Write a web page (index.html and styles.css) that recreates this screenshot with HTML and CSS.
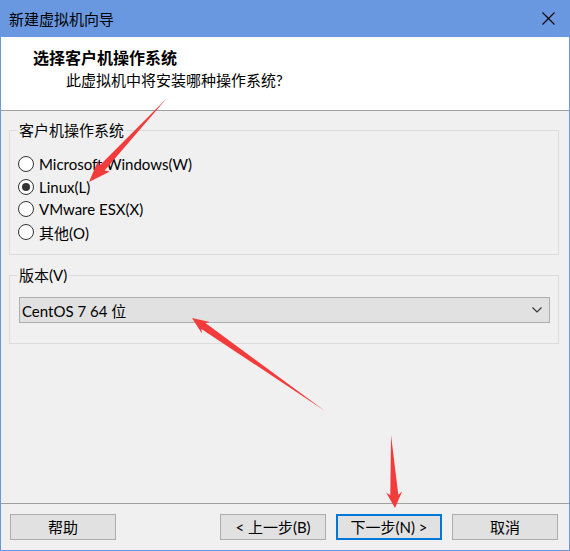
FILE: index.html
```html
<!DOCTYPE html>
<html lang="zh-CN">
<head>
<meta charset="utf-8">
<title>新建虚拟机向导</title>
<link rel="stylesheet" href="styles.css">
</head>
<body>
<div class="window">
  <div class="titlebar">
    <span class="title">新建虚拟机向导</span>
    <svg class="close" width="13" height="13" viewBox="0 0 13 13"><path d="M0.5 0.5 L12.5 12.5 M12.5 0.5 L0.5 12.5" stroke="#000" stroke-width="1.1" fill="none"/></svg>
  </div>
  <div class="header">
    <div class="h-title">选择客户机操作系统</div>
    <div class="h-sub">此虚拟机中将安装哪种操作系统?</div>
  </div>
  <div class="content">
    <fieldset class="group">
      <legend>客户机操作系统</legend>
      <div class="radio-row"><span class="radio"></span><span>Microsoft Windows(W)</span></div>
      <div class="radio-row"><span class="radio checked"></span><span>Linux(L)</span></div>
      <div class="radio-row"><span class="radio"></span><span>VMware ESX(X)</span></div>
      <div class="radio-row"><span class="radio"></span><span>其他(O)</span></div>
    </fieldset>
    <fieldset class="group version">
      <legend>版本(V)</legend>
      <div class="combo">
        <span class="combo-text">CentOS 7 64 位</span>
        <svg class="chev" width="10" height="6" viewBox="0 0 10 6"><path d="M0.5 0.5 L5 5 L9.5 0.5" stroke="#333" stroke-width="1.1" fill="none"/></svg>
      </div>
    </fieldset>
  </div>
  <div class="footer">
    <button class="btn">帮助</button>
    <div class="nav">
      <button class="btn">&lt; 上一步(B)</button>
      <button class="btn focused">下一步(N) &gt;</button>
      <button class="btn">取消</button>
    </div>
  </div>
  <svg class="annotations" width="570" height="551" viewBox="0 0 570 551">
    <polygon fill="#f23c3c" points="167,98 104.6,170.5 109.9,171.4 89,182 98.1,160.4 99.4,165.7"/>
    <polygon fill="#f23c3c" points="325,411 205.4,323.1 209.9,322 192,318 201.9,333.4 201.4,328.9"/>
    <polygon fill="#f23c3c" points="391,435 398.3,494.8 402.1,491.6 395,508 386.1,492.4 390.3,495.2"/>
  </svg>
</div>
</body>
</html>
```
FILE: styles.css
```css
* { box-sizing: border-box; }
html, body { margin: 0; padding: 0; }
body {
  font-family: "Lato", "Noto Sans CJK SC", sans-serif;
  font-size: 15px;
  color: #000;
  background: #f0f0f0;
}
.window {
  position: relative;
  width: 570px;
  height: 551px;
  display: flex;
  flex-direction: column;
  background: #f0f0f0;
  border: 1px solid #6a98e0;
  border-top: none;
}
.titlebar {
  height: 37px;
  flex: none;
  background: #6a98e0;
  display: flex;
  align-items: center;
  justify-content: space-between;
  padding: 0 15px 0 9px;
  margin: 0 -1px;
}
.title { line-height: 20px; }
.close { display: block; }
.header {
  flex: none;
  height: 74px;
  background: #fff;
  border-bottom: 1px solid #a0a0a0;
  padding-top: 11px;
}
.h-title {
  font-weight: bold;
  font-size: 16px;
  line-height: 20px;
  padding-left: 32px;
}
.h-sub {
  line-height: 20px;
  margin-top: 2px;
  padding-left: 65px;
}
.content {
  flex: 1;
  padding-top: 9px;
}
.group {
  margin: 0 10px 0 8px;
  padding: 13px 8px 11px 7px;
  border: 1px solid #dcdcdc;
  min-width: 0;
}
.group legend {
  padding: 0 2px;
  line-height: 20px;
}
.radio-row {
  height: 22.6px;
  display: flex;
  align-items: center;
  padding-left: 1px;
}
.radio {
  width: 16px;
  height: 16px;
  border: 1px solid #333;
  border-radius: 50%;
  background: #fff;
  margin-right: 5px;
  display: flex;
  align-items: center;
  justify-content: center;
}
.radio.checked::after {
  content: "";
  width: 8px;
  height: 8px;
  border-radius: 50%;
  background: #333;
}
.version {
  margin-top: 10px;
  padding-top: 12px;
  padding-bottom: 20px;
}
.combo {
  height: 26px;
  margin-left: 2px;
  background: #e1e1e1;
  border: 1px solid #adadad;
  display: flex;
  align-items: center;
  justify-content: space-between;
  padding: 0 7px 0 2px;
}
.chev { display: block; }
.footer {
  flex: none;
  border-top: 1px solid #a0a0a0;
  padding: 10px 11px 10px 9px;
  display: flex;
  justify-content: space-between;
}
.nav {
  display: flex;
  gap: 10px;
}
.btn {
  width: 106px;
  height: 26px;
  background: #e1e1e1;
  border: 1px solid #adadad;
  font-family: inherit;
  font-size: 15px;
  color: #000;
  padding: 0;
  line-height: 20px;
}
.btn.focused {
  border: 2px solid #0078d7;
}
.annotations {
  position: absolute;
  left: -1px;
  top: 0;
  pointer-events: none;
}
```
